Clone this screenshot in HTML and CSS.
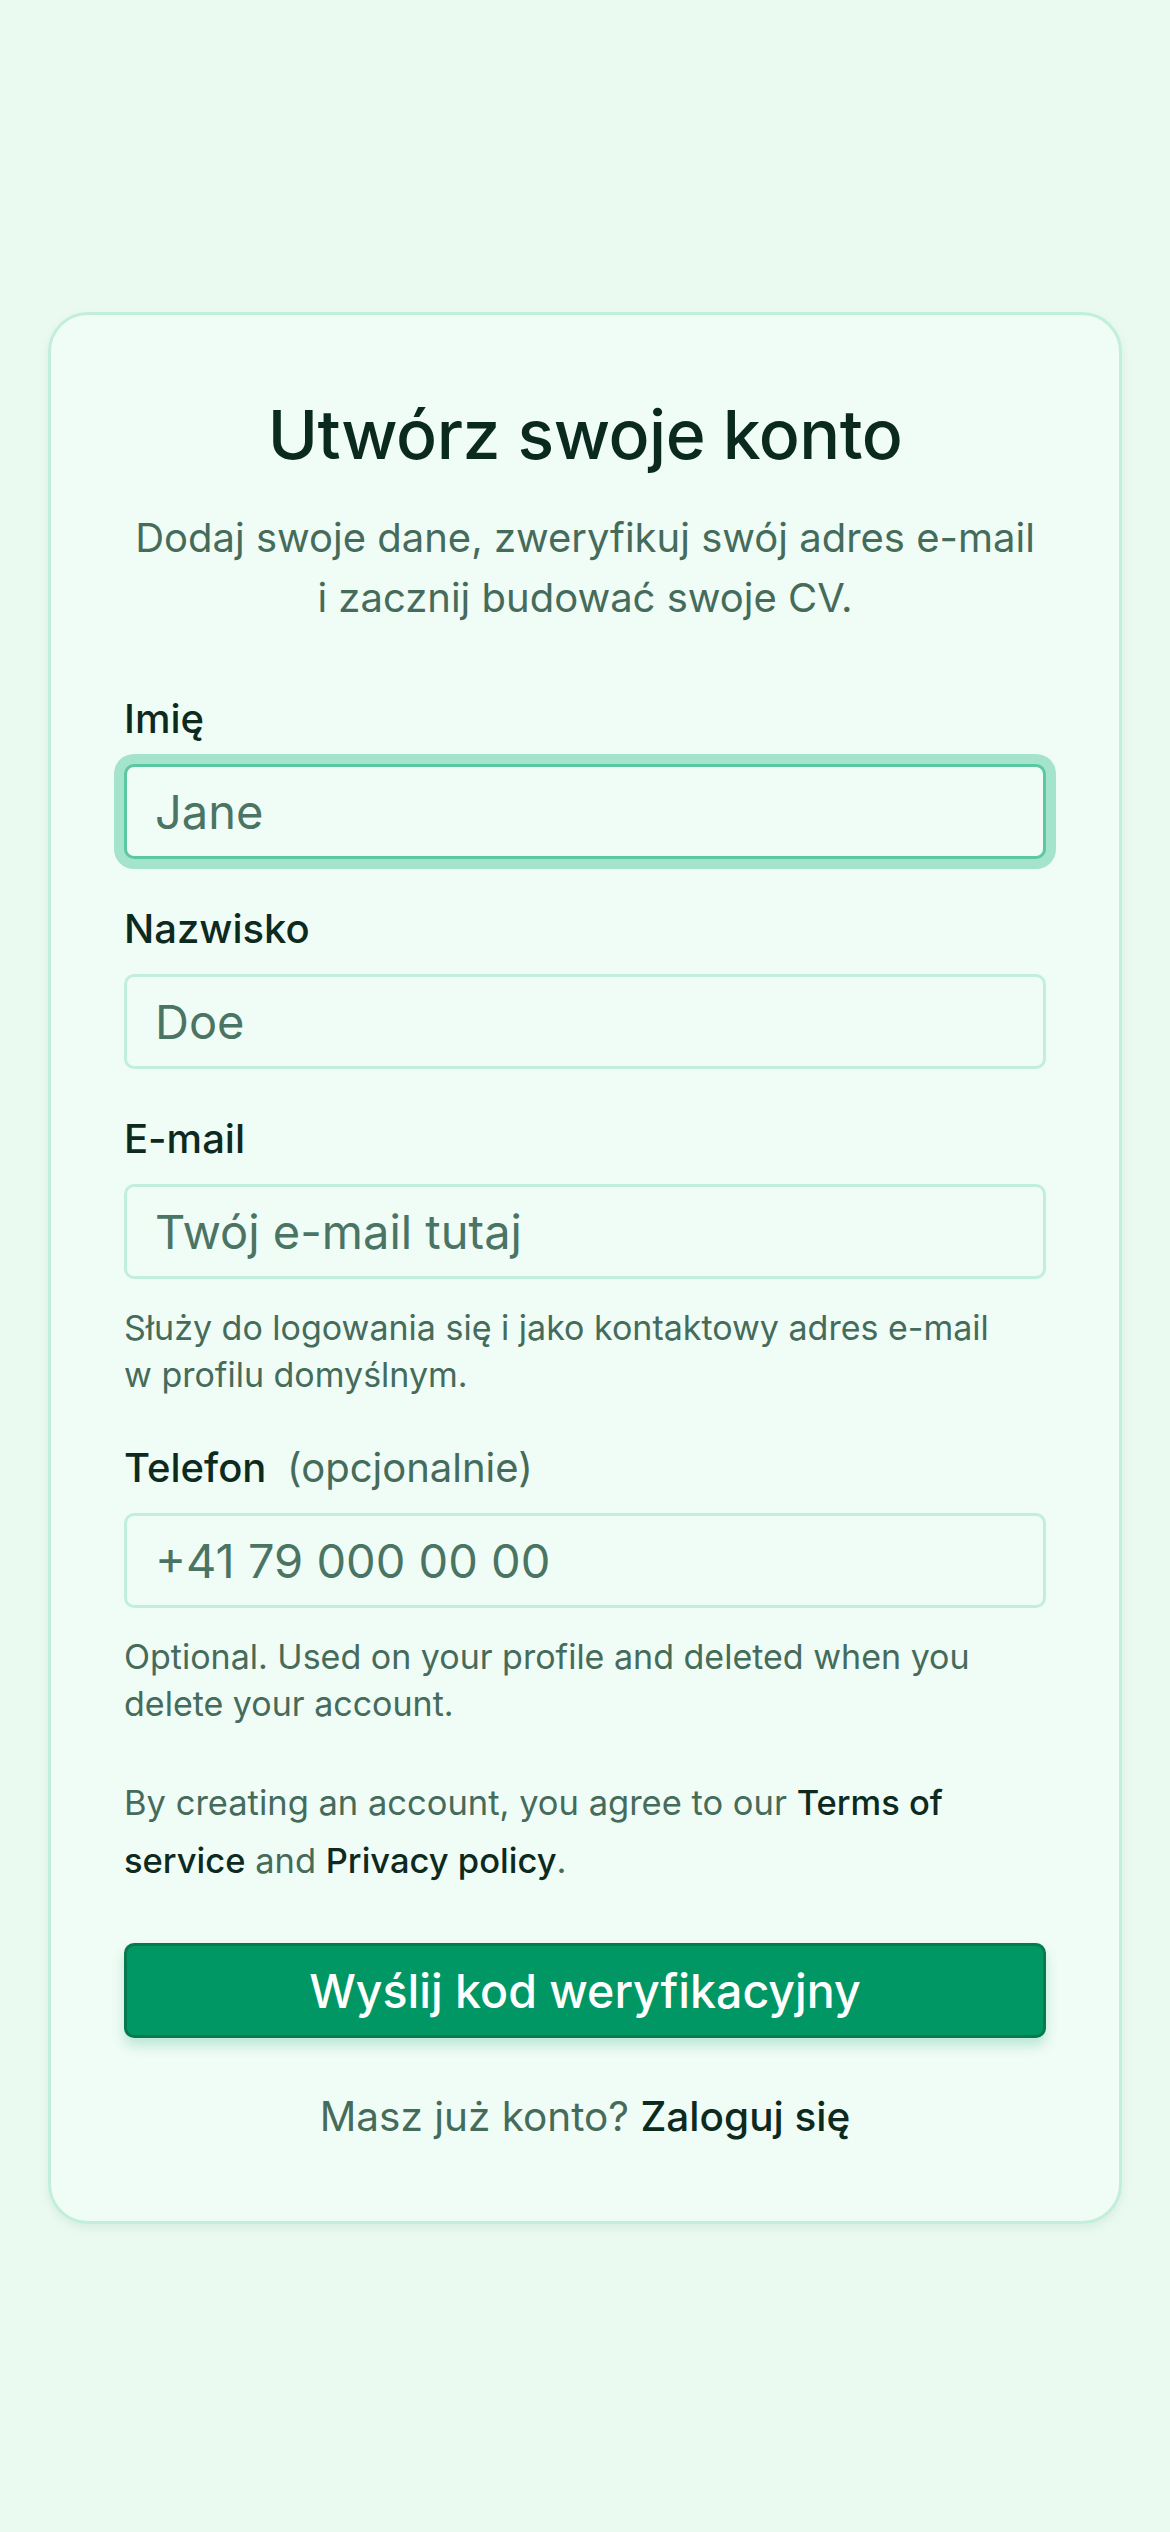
FILE: index.html
```html
<!DOCTYPE html>
<html lang="pl">
<head>
  <meta charset="UTF-8">
  <meta name="viewport" content="width=device-width, initial-scale=1.0">
  <title>Utwórz swoje konto</title>
  <link rel="stylesheet" href="styles.css">
</head>
<body>

  <!-- Sign up card -->
  <main class="page">
    <section class="card">
      <h1 class="card-title">Utwórz swoje konto</h1>
      <p class="card-lead">Dodaj swoje dane, zweryfikuj swój adres e-mail<br>i zacznij budować swoje CV.</p>

      <form class="signup-form" onsubmit="return false;">
        <div class="field">
          <label class="field-label" for="first-name">Imię</label>
          <input class="field-input is-focused" type="text" id="first-name" placeholder="Jane">
        </div>

        <div class="field">
          <label class="field-label" for="last-name">Nazwisko</label>
          <input class="field-input" type="text" id="last-name" placeholder="Doe">
        </div>

        <div class="field">
          <label class="field-label" for="email">E-mail</label>
          <input class="field-input" type="email" id="email" placeholder="Twój e-mail tutaj">
          <p class="field-help">Służy do logowania się i jako kontaktowy adres e-mail w profilu domyślnym.</p>
        </div>

        <div class="field">
          <label class="field-label" for="phone">Telefon <span class="field-optional">(opcjonalnie)</span></label>
          <input class="field-input" type="tel" id="phone" placeholder="+41 79 000 00 00">
          <p class="field-help">Optional. Used on your profile and deleted when you delete your account.</p>
        </div>

        <p class="terms">By creating an account, you agree to our <a href="#">Terms of service</a> and <a href="#">Privacy policy</a>.</p>

        <button class="submit-button" type="submit">Wyślij kod weryfikacyjny</button>
      </form>

      <p class="login-link">Masz już konto? <a href="#">Zaloguj się</a></p>
    </section>
  </main>

</body>
</html>
```

FILE: styles.css
```css
/* General Styles */
body {
  font-family: 'Inter', 'Liberation Sans', sans-serif;
  background-color: #eafaf1;
  margin: 0;
  padding: 0;
  color: #0d2a1f;
}

.page {
  padding: 312px 48px 120px;
}

/* Card */
.card {
  max-width: 1074px;
  margin: 0 auto;
  box-sizing: border-box;
  padding: 76px 73px 79px;
  background-color: #f0fcf6;
  border: 3px solid #c2eedc;
  border-radius: 40px;
  box-shadow: 0 4px 10px rgba(20, 90, 60, 0.08);
}

.card-title {
  margin: 0;
  font-size: 68px;
  font-weight: 500;
  line-height: 86px;
  letter-spacing: -0.5px;
  text-align: center;
  color: #0b2a1f;
}

.card-lead {
  margin: 31px 0 0;
  font-size: 40px;
  line-height: 60px;
  text-align: center;
  color: #456b5b;
}

/* Form */
.signup-form {
  display: flex;
  flex-direction: column;
  gap: 47px;
  margin-top: 68px;
}

.field {
  display: flex;
  flex-direction: column;
}

.field-label {
  font-size: 40px;
  font-weight: 500;
  line-height: 46px;
  margin-bottom: 22px;
  color: #0d2a1f;
}

.field-optional {
  margin-left: 10px;
  font-weight: 400;
  color: #456b5b;
}

.field-input {
  height: 95px;
  box-sizing: border-box;
  padding: 0 28px;
  font-family: inherit;
  font-size: 47px;
  color: #0d2a1f;
  background-color: #f0fcf6;
  border: 3px solid #c2efdd;
  border-radius: 10px;
  outline: none;
}

.field-input::placeholder {
  color: #4a7463;
  opacity: 1;
}

.field-input.is-focused {
  border-color: #5cc8a0;
  box-shadow: 0 0 0 10px #a4e3cc;
}

.field-help {
  max-width: 880px;
  margin: 25px 0 0;
  font-size: 34px;
  line-height: 47px;
  color: #456b5b;
}

.terms {
  margin: 0;
  font-size: 34.5px;
  line-height: 58px;
  color: #456b5b;
}

.terms a {
  color: #0d2a1f;
  font-weight: 500;
  text-decoration: none;
}

/* Button */
.submit-button {
  margin-top: 6px;
  height: 95px;
  font-family: inherit;
  font-size: 46.5px;
  font-weight: 500;
  color: #ffffff;
  background-color: #009764;
  border: 3px solid #067a4f;
  border-radius: 10px;
  box-shadow: 0 8px 12px rgba(40, 170, 120, 0.25);
  cursor: pointer;
}

.login-link {
  margin: 54px 0 0;
  font-size: 40.5px;
  line-height: 50px;
  text-align: center;
  color: #456b5b;
}

.login-link a {
  color: #0d2a1f;
  font-weight: 500;
  text-decoration: none;
}
```
